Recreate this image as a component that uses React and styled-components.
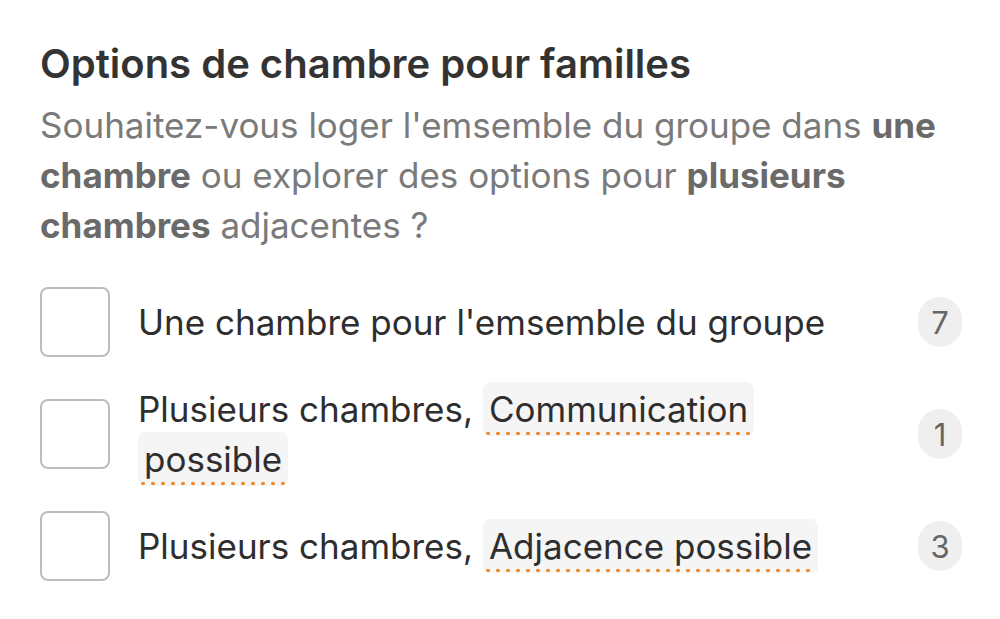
import React from 'react'
import styled, { createGlobalStyle } from 'styled-components'

// ============================================================================================================ Data

const options = [
    { id: 1, label: 'Une chambre pour l\'emsemble du groupe', count: 7 },
    { id: 2, label: 'Plusieurs chambres,', tag: 'Communication possible', count: 1 },
    { id: 3, label: 'Plusieurs chambres,', tag: 'Adjacence possible', count: 3 },
]

// ============================================================================================================ Logic

const App = () => (
    <>
        <GlobalStyle />
        <Panel>
            <Title>Options de chambre pour familles</Title>
            <Description>
                Souhaitez-vous loger l'emsemble du groupe dans <strong>une chambre</strong> ou explorer des options pour <strong>plusieurs chambres</strong> adjacentes ?
            </Description>
            <OptionList>
                {options.map((option) => (
                    <Option key={option.id}>
                        <Checkbox type="button" aria-label={option.label} />
                        <Label>
                            {option.label}
                            {option.tag && <> <Tag>{option.tag}</Tag></>}
                        </Label>
                        <Count>{option.count}</Count>
                    </Option>
                ))}
            </OptionList>
        </Panel>
    </>
)

// ============================================================================================================ Styles

const GlobalStyle = createGlobalStyle`
    html, body {
        margin: 0;
        background: #ffffff;
    }
    body {
        font-family: Inter, "Liberation Sans", sans-serif;
        -webkit-font-smoothing: antialiased;
    }
`

const Panel = styled.div`
    padding: 38px 38px 40px 40px;
`

const Title = styled.h2`
    margin: 0 0 10px;
    font-size: 40px;
    line-height: 52px;
    font-weight: 600;
    color: #333333;
`

const Description = styled.p`
    margin: 0;
    font-size: 35px;
    line-height: 50px;
    color: #7a7a7a;

    strong {
        font-weight: 700;
        color: #6a6a6a;
    }
`

const OptionList = styled.div`
    display: flex;
    flex-direction: column;
    gap: 27px;
    margin-top: 37px;
`

const Option = styled.div`
    display: grid;
    grid-template-columns: 70px 1fr auto;
    align-items: center;
    column-gap: 28px;
`

const Checkbox = styled.button`
    width: 70px;
    height: 70px;
    padding: 0;
    background: #ffffff;
    border: 2px solid #bcbcbc;
    border-radius: 8px;
`

const Label = styled.div`
    font-size: 35px;
    line-height: 50px;
    color: #2e2e2e;
`

const Tag = styled.span`
    padding: 6px 6px;
    border-radius: 8px;
    background:
        radial-gradient(circle, #f28a2e 1.6px, transparent 2.1px) 0 100% / 10px 5px repeat-x,
        #f5f5f5;
    -webkit-box-decoration-break: clone;
    box-decoration-break: clone;
`

const Count = styled.span`
    display: inline-flex;
    align-items: center;
    justify-content: center;
    min-width: 20px;
    height: 50px;
    padding: 0 12px;
    border-radius: 22px;
    background: #efefef;
    color: #666666;
    font-size: 31px;
`

export default App
